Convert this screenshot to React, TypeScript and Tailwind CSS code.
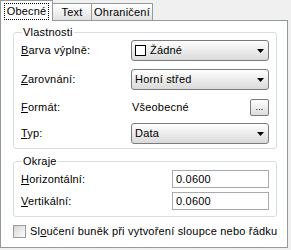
import React from "react";

const Arrow = () => (
  <svg width="7" height="4" viewBox="0 0 7 4" className="shrink-0">
    <path d="M0 0h7L3.5 4z" fill="#000" />
  </svg>
);

function Combo({ children }: { children: React.ReactNode }) {
  return (
    <div className="flex h-[21px] w-[138px] items-center rounded-[3px] border border-[#7b7b7b] bg-linear-to-b from-white to-[#dadada] pl-[3px] pr-[4px]">
      <div className="flex flex-1 items-center">{children}</div>
      <Arrow />
    </div>
  );
}

function Row({ label, children, className = "" }: { label: React.ReactNode; children: React.ReactNode; className?: string }) {
  return (
    <div className={`flex h-[21px] items-center ${className}`}>
      <div className="w-[110px]">{label}</div>
      {children}
    </div>
  );
}

function Field({ value }: { value: string }) {
  return (
    <div className="flex h-[18px] w-[97px] items-center border border-[#a7abb0] bg-white pl-[3px]">{value}</div>
  );
}

export default function App() {
  return (
    <div className="h-[250px] w-[291px] bg-[#f0f0f0] font-['Liberation_Sans',Arial,sans-serif] text-[11px] leading-[13px] tracking-[0.2px] text-black">
      <div className="flex h-[20px] items-end">
        <div className="relative z-10 -mb-px flex h-[21px] w-[53px] items-center justify-center border border-b-0 border-[#919b9c] bg-white">
          <span className="border border-dotted border-black px-[2px] py-px">Obecné</span>
        </div>
        <div className="flex h-[17px] w-[39px] items-center justify-center border border-b-0 border-l-0 border-[#919b9c] bg-linear-to-b from-white to-[#e2e2e2]">
          Text
        </div>
        <div className="flex h-[17px] w-[61px] items-center justify-center border border-b-0 border-l-0 border-[#919b9c] bg-linear-to-b from-white to-[#e2e2e2]">
          Ohraničení
        </div>
      </div>
      <div className="h-[228px] w-[288px] border border-[#919b9c] bg-white pl-[12px] pt-[5px]">
        <fieldset className="w-[264px] rounded-[3px] border border-[#d5dde2] px-[7px] pb-[4px] pt-px">
          <legend className="ml-px px-px">Vlastnosti</legend>
          <Row label={<><span className="underline">B</span>arva výplně:</>}>
            <Combo>
              <span className="mr-[4px] h-[11px] w-[11px] border border-black bg-white" />
              Žádné
            </Combo>
          </Row>
          <Row className="mt-[8px]" label={<><span className="underline">Z</span>arovnání:</>}>
            <Combo>Horní střed</Combo>
          </Row>
          <Row className="mt-[7px]" label={<><span className="underline">F</span>ormát:</>}>
            <div className="flex w-[138px] items-center justify-between pl-px">
              <span>Všeobecné</span>
              <div className="flex h-[17px] w-[19px] items-end justify-center rounded-[2px] border border-[#7b7b7b] bg-linear-to-b from-white to-[#dcdcdc] pb-[3px] text-[9px] leading-[9px]">
                ...
              </div>
            </div>
          </Row>
          <Row className="mt-[5px]" label={<><span className="underline">T</span>yp:</>}>
            <Combo>Data</Combo>
          </Row>
        </fieldset>
        <fieldset className="mt-[6px] w-[264px] rounded-[3px] border border-[#d5dde2] px-[7px] pb-[5px] pt-px">
          <legend className="ml-px px-px">Okraje</legend>
          <div className="flex h-[20px] items-center">
            <div className="w-[151px]"><span className="underline">H</span>orizontální:</div>
            <Field value="0.0600" />
          </div>
          <div className="mt-[2px] flex h-[20px] items-center">
            <div className="w-[151px]"><span className="underline">V</span>ertikální:</div>
            <Field value="0.0600" />
          </div>
        </fieldset>
        <div className="mt-[8px] flex items-center gap-[4px]">
          <div className="h-[13px] w-[13px] border border-[#9a9a9a] bg-linear-to-br from-[#d4d4d4] to-white" />
          <span>Sl<span className="underline">o</span>učení buněk při vytvoření sloupce nebo řádku</span>
        </div>
      </div>
    </div>
  );
}
